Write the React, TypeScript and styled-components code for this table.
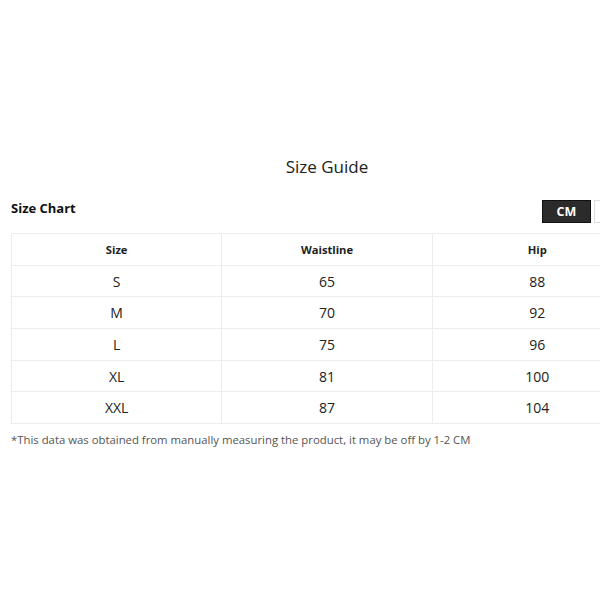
import React from "react";
import styled, { createGlobalStyle } from "styled-components";

const Global = createGlobalStyle`
  html, body { margin: 0; padding: 0; background: #fff; overflow: hidden; }
  body { font-family: "Open Sans", "Noto Sans", "Liberation Sans", sans-serif; color: #222; }
`;

const Page = styled.div`
  width: 632px;
  margin-left: 11px;
  padding-top: 155px;
`;

const Title = styled.h1`
  margin: 0;
  text-align: center;
  font-size: 17px;
  font-weight: 400;
  line-height: 24px;
  color: #222;
`;

const HeadRow = styled.div`
  display: flex;
  align-items: center;
  justify-content: space-between;
  height: 26px;
  margin-top: 18px;
`;

const ChartLabel = styled.div`
  font-size: 13px;
  font-weight: 700;
  color: #111;
  margin-top: -4px;
`;

const Toggle = styled.div`
  display: flex;
  gap: 3px;
  align-self: flex-start;
  margin-top: 3px;
`;

const UnitButton = styled.div<{ $active?: boolean }>`
  width: 49px;
  height: 23px;
  box-sizing: border-box;
  display: flex;
  align-items: center;
  justify-content: center;
  font-size: 12.5px;
  font-weight: 700;
  background: ${(p) => (p.$active ? "#2b2b2b" : "#fff")};
  color: ${(p) => (p.$active ? "#fff" : "#333")};
  border: 1px solid ${(p) => (p.$active ? "#111" : "#ddd")};
`;

const Table = styled.table`
  width: 632px;
  margin-top: 10px;
  border-collapse: collapse;
  table-layout: fixed;
`;

const Th = styled.th`
  height: 30.7px;
  padding: 0;
  border: 1px solid #ececec;
  font-size: 11.2px;
  font-weight: 700;
  color: #222;
  text-align: center;
`;

const Td = styled.td`
  height: 30.7px;
  padding: 0;
  border: 1px solid #ececec;
  font-size: 14px;
  font-weight: 400;
  color: #222;
  text-align: center;
`;

const Note = styled.p`
  margin: 7px 0 0 0;
  font-size: 11.35px;
  color: #555;
  line-height: 18px;
`;

const rows = [
  ["S", "65", "88"],
  ["M", "70", "92"],
  ["L", "75", "96"],
  ["XL", "81", "100"],
  ["XXL", "87", "104"],
];

export default function App() {
  return (
    <>
      <Global />
      <Page>
        <Title>Size Guide</Title>
        <HeadRow>
          <ChartLabel>Size Chart</ChartLabel>
          <Toggle>
            <UnitButton $active>CM</UnitButton>
            <UnitButton aria-label="INCH" />
          </Toggle>
        </HeadRow>
        <Table>
          <thead>
            <tr>
              <Th>Size</Th>
              <Th>Waistline</Th>
              <Th>Hip</Th>
            </tr>
          </thead>
          <tbody>
            {rows.map((r) => (
              <tr key={r[0]}>
                {r.map((c, i) => (
                  <Td key={i}>{c}</Td>
                ))}
              </tr>
            ))}
          </tbody>
        </Table>
        <Note>*This data was obtained from manually measuring the product, it may be off by 1-2 CM</Note>
      </Page>
    </>
  );
}
